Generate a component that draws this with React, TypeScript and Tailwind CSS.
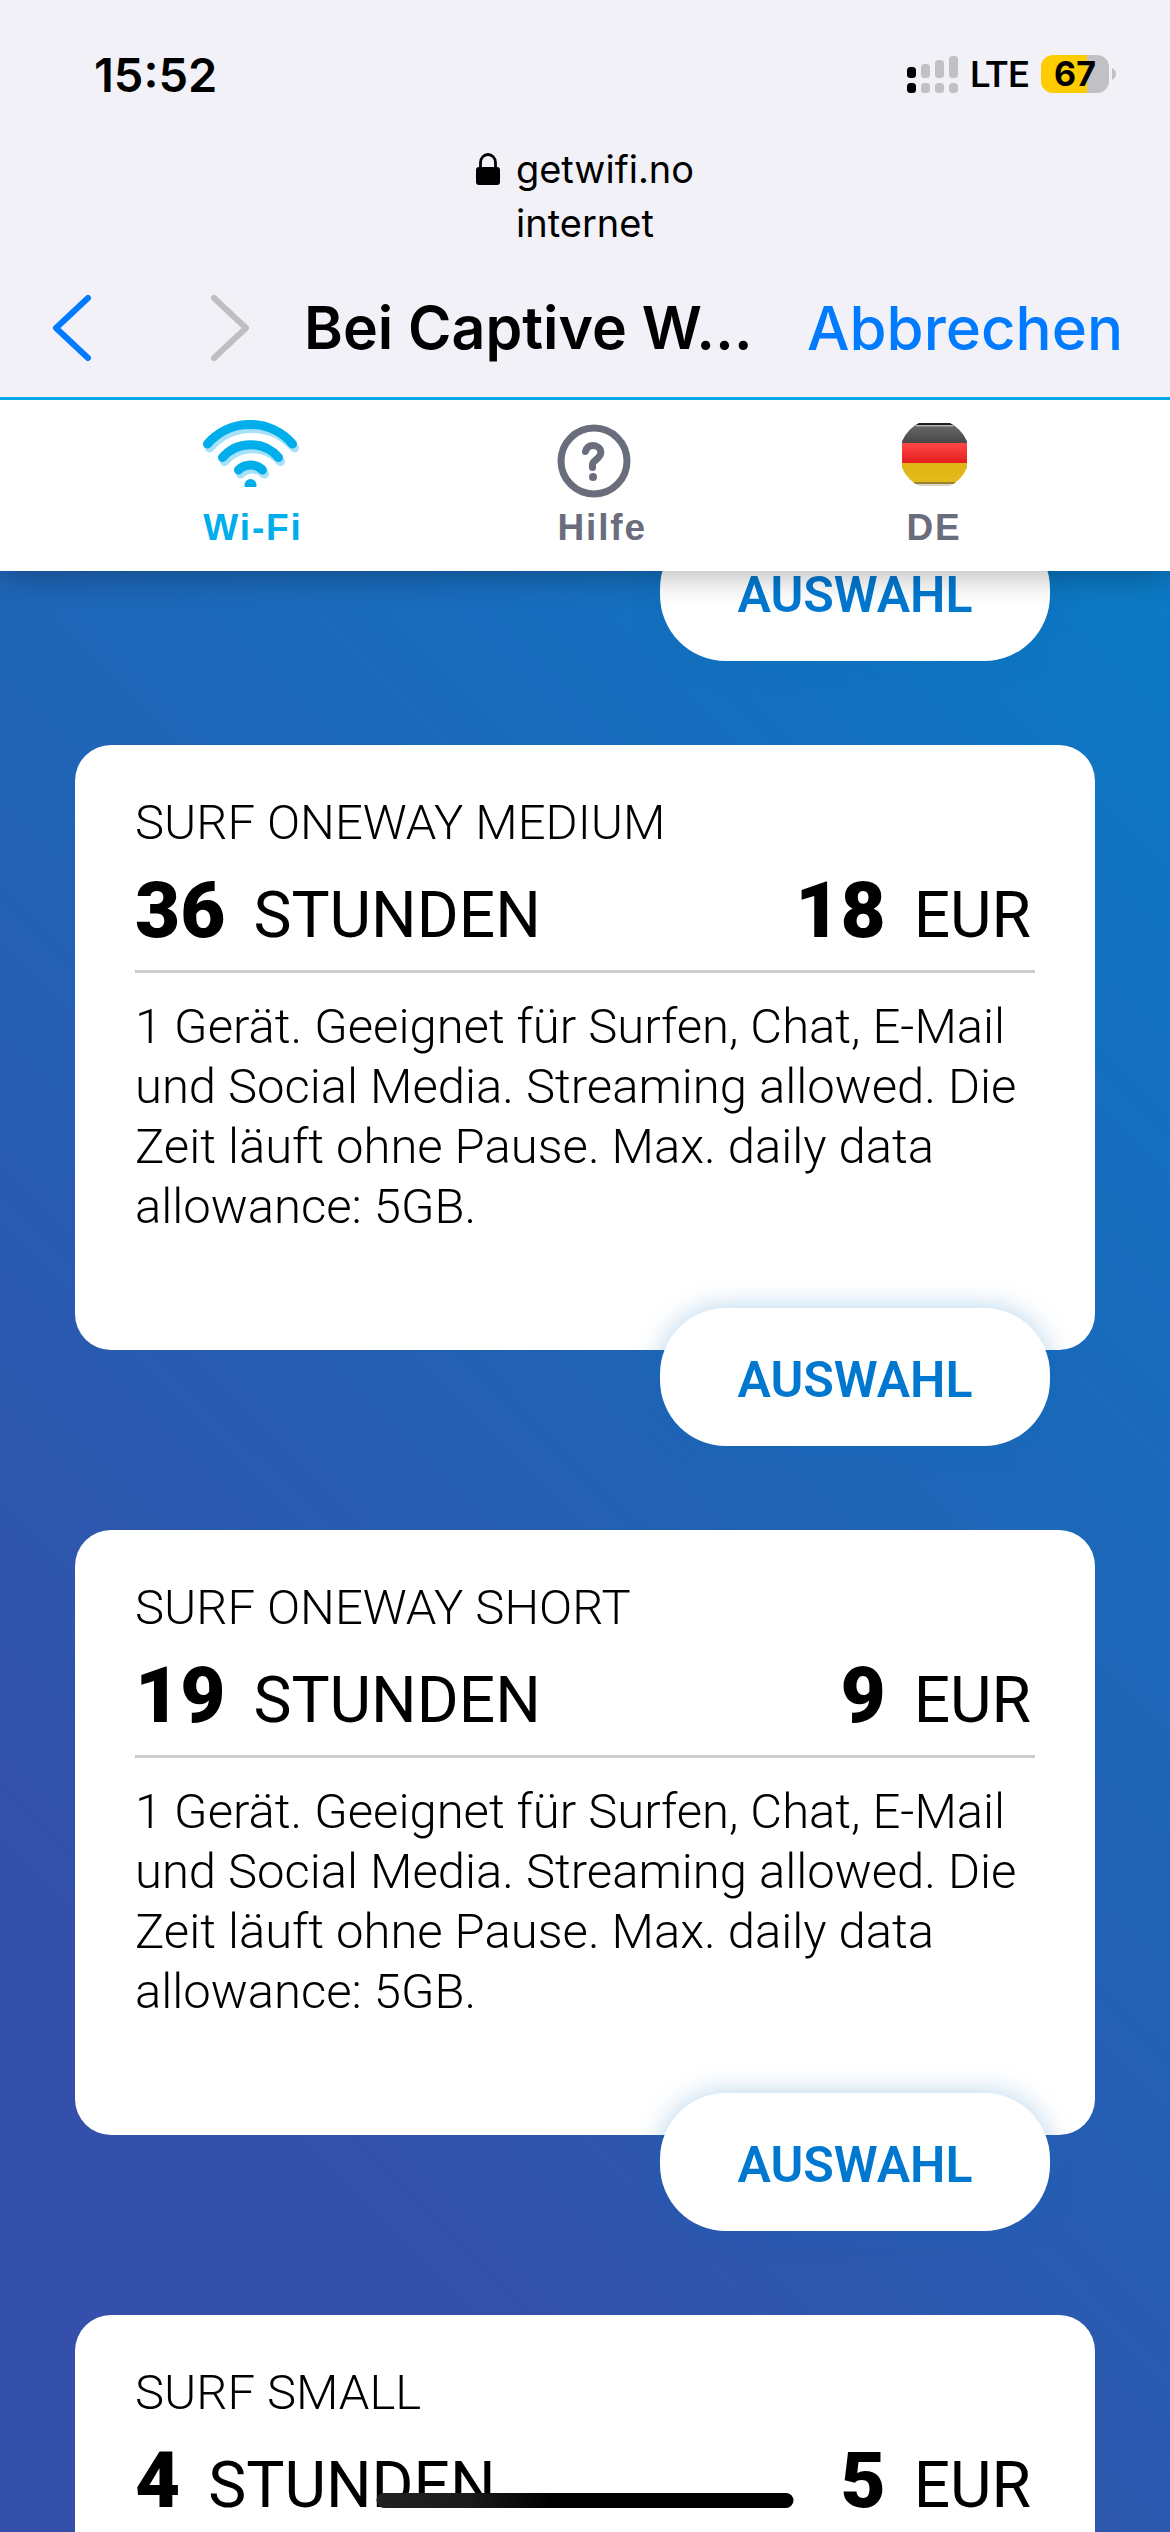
import React from 'react';

type Plan = { name: string; hours: string; price: string; text?: string };

const DESCRIPTION =
  '1 Gerät. Geeignet für Surfen, Chat, E-Mail und Social Media. Streaming allowed. Die Zeit läuft ohne Pause. Max. daily data allowance: 5GB.';

const PLANS: Plan[] = [
  { name: 'SURF ONEWAY MEDIUM', hours: '36', price: '18', text: DESCRIPTION },
  { name: 'SURF ONEWAY SHORT', hours: '19', price: '9', text: DESCRIPTION },
  { name: 'SURF SMALL', hours: '4', price: '5' },
];

function SignalIcon() {
  const tops = [11, 8, 4, 0];
  return (
    <svg width="51" height="38" viewBox="0 0 51 38" aria-hidden="true">
      {tops.map((top, i) => (
        <g key={top} fill={i === 0 ? '#000000' : '#c1c0c5'}>
          <rect x={i * 14} y={top + 1} width="9" height={22 - top} rx="3.5" />
          <rect x={i * 14} y="28" width="9" height="10" rx="3.5" />
        </g>
      ))}
    </svg>
  );
}

function Battery() {
  return (
    <div className="flex items-center gap-[3px]">
      <div className="flex h-[38px] w-[68px] items-center justify-center rounded-xl bg-[linear-gradient(90deg,#ffcc00_67%,#c1c0c5_67%)] text-[34px] leading-none font-bold">
        67
      </div>
      <svg width="4" height="12" viewBox="0 0 4 12" aria-hidden="true">
        <path d="M0 0C2.600 1.200 4 3.400 4 6S2.600 10.800 0 12Z" fill="#c1c0c5" />
      </svg>
    </div>
  );
}

function LockIcon() {
  return (
    <svg width="24" height="32" viewBox="0 0 24 32" aria-hidden="true">
      <path d="M4.500 16V9.500a7.500 8 0 0 1 15 0V16" fill="none" stroke="#000" strokeWidth="2.800" />
      <rect x="0" y="14" width="24" height="18" rx="3" />
    </svg>
  );
}

function Chevron({ d, color }: { d: string; color: string }) {
  return (
    <svg width="40" height="68" viewBox="0 0 40 68" aria-hidden="true">
      <path d={d} fill="none" stroke={color} strokeWidth="6" strokeLinecap="round" strokeLinejoin="round" />
    </svg>
  );
}

function WifiIcon() {
  const arcs = 'M4.500 24A56 56 0 0 1 89.500 24M19.500 37.500A37 37 0 0 1 75.500 37.500M35.500 50A17 17 0 0 1 59.500 50';
  return (
    <svg width="96" height="67" viewBox="0 0 96 67" fill="none" strokeWidth="9" strokeLinecap="round" aria-hidden="true">
      <path d={arcs} stroke="#a6e1f8" transform="translate(2 4)" />
      <path d={arcs} stroke="#00aeeb" />
      <circle cx="47.500" cy="65" r="6" fill="#00aeeb" />
    </svg>
  );
}

function HelpIcon() {
  return (
    <svg width="74" height="74" viewBox="0 0 74 74" fill="none" stroke="#6a6d7c" strokeWidth="7" aria-hidden="true">
      <circle cx="37" cy="37" r="33" />
      <path
        d="M28.500 27.500C29.500 23.500 32.500 21.500 36 21.500C40.500 21.500 43.800 24.500 43.800 28.500C43.800 34.500 35.500 36.500 35.500 40.500V43.500"
        strokeLinecap="round"
        strokeLinejoin="round"
      />
      <circle cx="36" cy="53" r="4" fill="#6a6d7c" stroke="none" />
    </svg>
  );
}

function GermanFlag() {
  return (
    <svg width="65" height="64" viewBox="0 0 65 64" aria-hidden="true">
      <defs>
        <clipPath id="flag-disc">
          <circle cx="32.500" cy="31.500" r="35" />
        </clipPath>
        <linearGradient id="flag-black" x1="0" y1="0" x2="0" y2="1">
          <stop offset="0" stopColor="#6b6b6b" />
          <stop offset="1" stopColor="#484848" />
        </linearGradient>
        <linearGradient id="flag-red" x1="0" y1="0" x2="0" y2="1">
          <stop offset="0" stopColor="#ff4747" />
          <stop offset="1" stopColor="#e41f1f" />
        </linearGradient>
        <linearGradient id="flag-gold" x1="0" y1="0" x2="0" y2="1">
          <stop offset="0" stopColor="#e0b414" />
          <stop offset="1" stopColor="#e2bc1c" />
        </linearGradient>
      </defs>
      <g clipPath="url(#flag-disc)">
        <rect width="65" height="20" fill="url(#flag-black)" />
        <rect width="65" height="2" fill="#1d1d1d" />
        <rect x="14" y="2" width="37" height="1.500" fill="#b0b0b0" />
        <rect y="20" width="65" height="20" fill="url(#flag-red)" />
        <rect y="40" width="65" height="20" fill="url(#flag-gold)" />
        <rect y="59" width="65" height="2" fill="#9c8332" />
        <rect y="61" width="65" height="2" fill="#d9d6cc" />
      </g>
    </svg>
  );
}

function SelectButton() {
  return (
    <div className="flex justify-end pr-[45px]">
      <button
        type="button"
        className="h-[138px] w-[390px] rounded-[66px] bg-white pt-1.5 text-[50px] leading-[60px] font-semibold text-[#0078d0] shadow-[0_0_28px_rgba(0,110,190,0.300)]"
      >
        AUSWAHL
      </button>
    </div>
  );
}

function PlanItem({ plan }: { plan: Plan }) {
  return (
    <li>
      <article className="rounded-[36px] bg-white px-[60px] pt-12 pb-[113px]">
        <h2 className="text-[49px] leading-[60px] font-light">{plan.name}</h2>
        <div className="mt-4 flex items-baseline justify-between border-b-[3px] border-[#cccccc] pr-1 pb-3 text-[64px] leading-[84px]">
          <p className="flex items-baseline gap-7">
            <strong className="text-[78px] font-black">{plan.hours}</strong>
            <span>STUNDEN</span>
          </p>
          <p className="flex items-baseline gap-7">
            <strong className="text-[78px] font-black">{plan.price}</strong>
            <span>EUR</span>
          </p>
        </div>
        {plan.text && <p className="mt-6 text-[49px] leading-[60px] font-light">{plan.text}</p>}
      </article>
      {plan.text && (
        <div className="relative -mt-[42px]">
          <SelectButton />
        </div>
      )}
    </li>
  );
}

export default function App() {
  return (
    <div className="relative flex h-screen flex-col overflow-hidden bg-white font-['Roboto',sans-serif] text-black">
      <header className="relative z-20 border-b-[3px] border-[#05a9e5] bg-[#f2f1f7] pb-[33px] font-['Inter',sans-serif]">
        <div className="flex h-[102px] items-center justify-between pt-[46px] pr-[54px] pl-[94px]">
          <time className="text-[47px] leading-none font-semibold">15:52</time>
          <div className="flex items-center gap-3">
            <SignalIcon />
            <span className="font-['Roboto',sans-serif] text-[37px] leading-none font-medium">LTE</span>
            <Battery />
          </div>
        </div>
        <div className="mt-10 text-center text-[38px] leading-[54px]">
          <p className="flex items-center justify-center gap-4">
            <LockIcon />
            getwifi.no
          </p>
          <p>internet</p>
        </div>
        <div className="mt-[42px] flex items-center pr-[47px] pl-[52px] text-[60px] leading-[72px]">
          <button type="button" aria-label="Zurück">
            <Chevron d="M36 4L4 34L36 64" color="#007aff" />
          </button>
          <button type="button" aria-label="Vorwärts" className="ml-[118px]">
            <Chevron d="M4 4L36 34L4 64" color="#bfbfc1" />
          </button>
          <h1 className="ml-[54px] flex-1 text-[59px] font-semibold whitespace-nowrap">Bei Captive W…</h1>
          <button type="button" className="font-medium text-[#007aff]">
            Abbrechen
          </button>
        </div>
      </header>

      <nav className="relative z-10 flex justify-around bg-white px-[76px] pt-5 pb-[22px] font-['Liberation_Sans',sans-serif] text-[37px] leading-[43px] font-bold tracking-wider text-[#6a6d7c] shadow-[0_4px_30px_rgba(0,0,0,0.300)]">
        <a href="#wifi" className="flex flex-col text-[#00aeeb]">
          <span className="flex h-[86px]">
            <WifiIcon />
          </span>
          <span className="mt-auto">Wi-Fi</span>
        </a>
        <a href="#hilfe" className="flex flex-col">
          <span className="flex h-[86px] pt-1">
            <HelpIcon />
          </span>
          <span>Hilfe</span>
        </a>
        <a href="#sprache" className="flex flex-col items-center">
          <span className="flex h-[86px] pt-[3px]">
            <GermanFlag />
          </span>
          <span>DE</span>
        </a>
      </nav>

      <main className="min-h-0 flex-1 overflow-hidden bg-[linear-gradient(45deg,#3550aa_0%,#3450aa_22%,#2163b5_57%,#186cbd_77%,#0b7ac5_100%)] px-[75px]">
        <ul className="-mt-12 flex flex-col gap-[84px]">
          <li>
            <SelectButton />
          </li>
          {PLANS.map((plan) => (
            <PlanItem key={plan.name} plan={plan} />
          ))}
        </ul>
      </main>

      <div className="absolute bottom-6 left-1/2 h-[15px] w-[417px] -translate-x-1/2 rounded-full bg-[linear-gradient(90deg,#222222_0%,#1a1a1a_22%,#000000_42%)]" />
    </div>
  );
}
